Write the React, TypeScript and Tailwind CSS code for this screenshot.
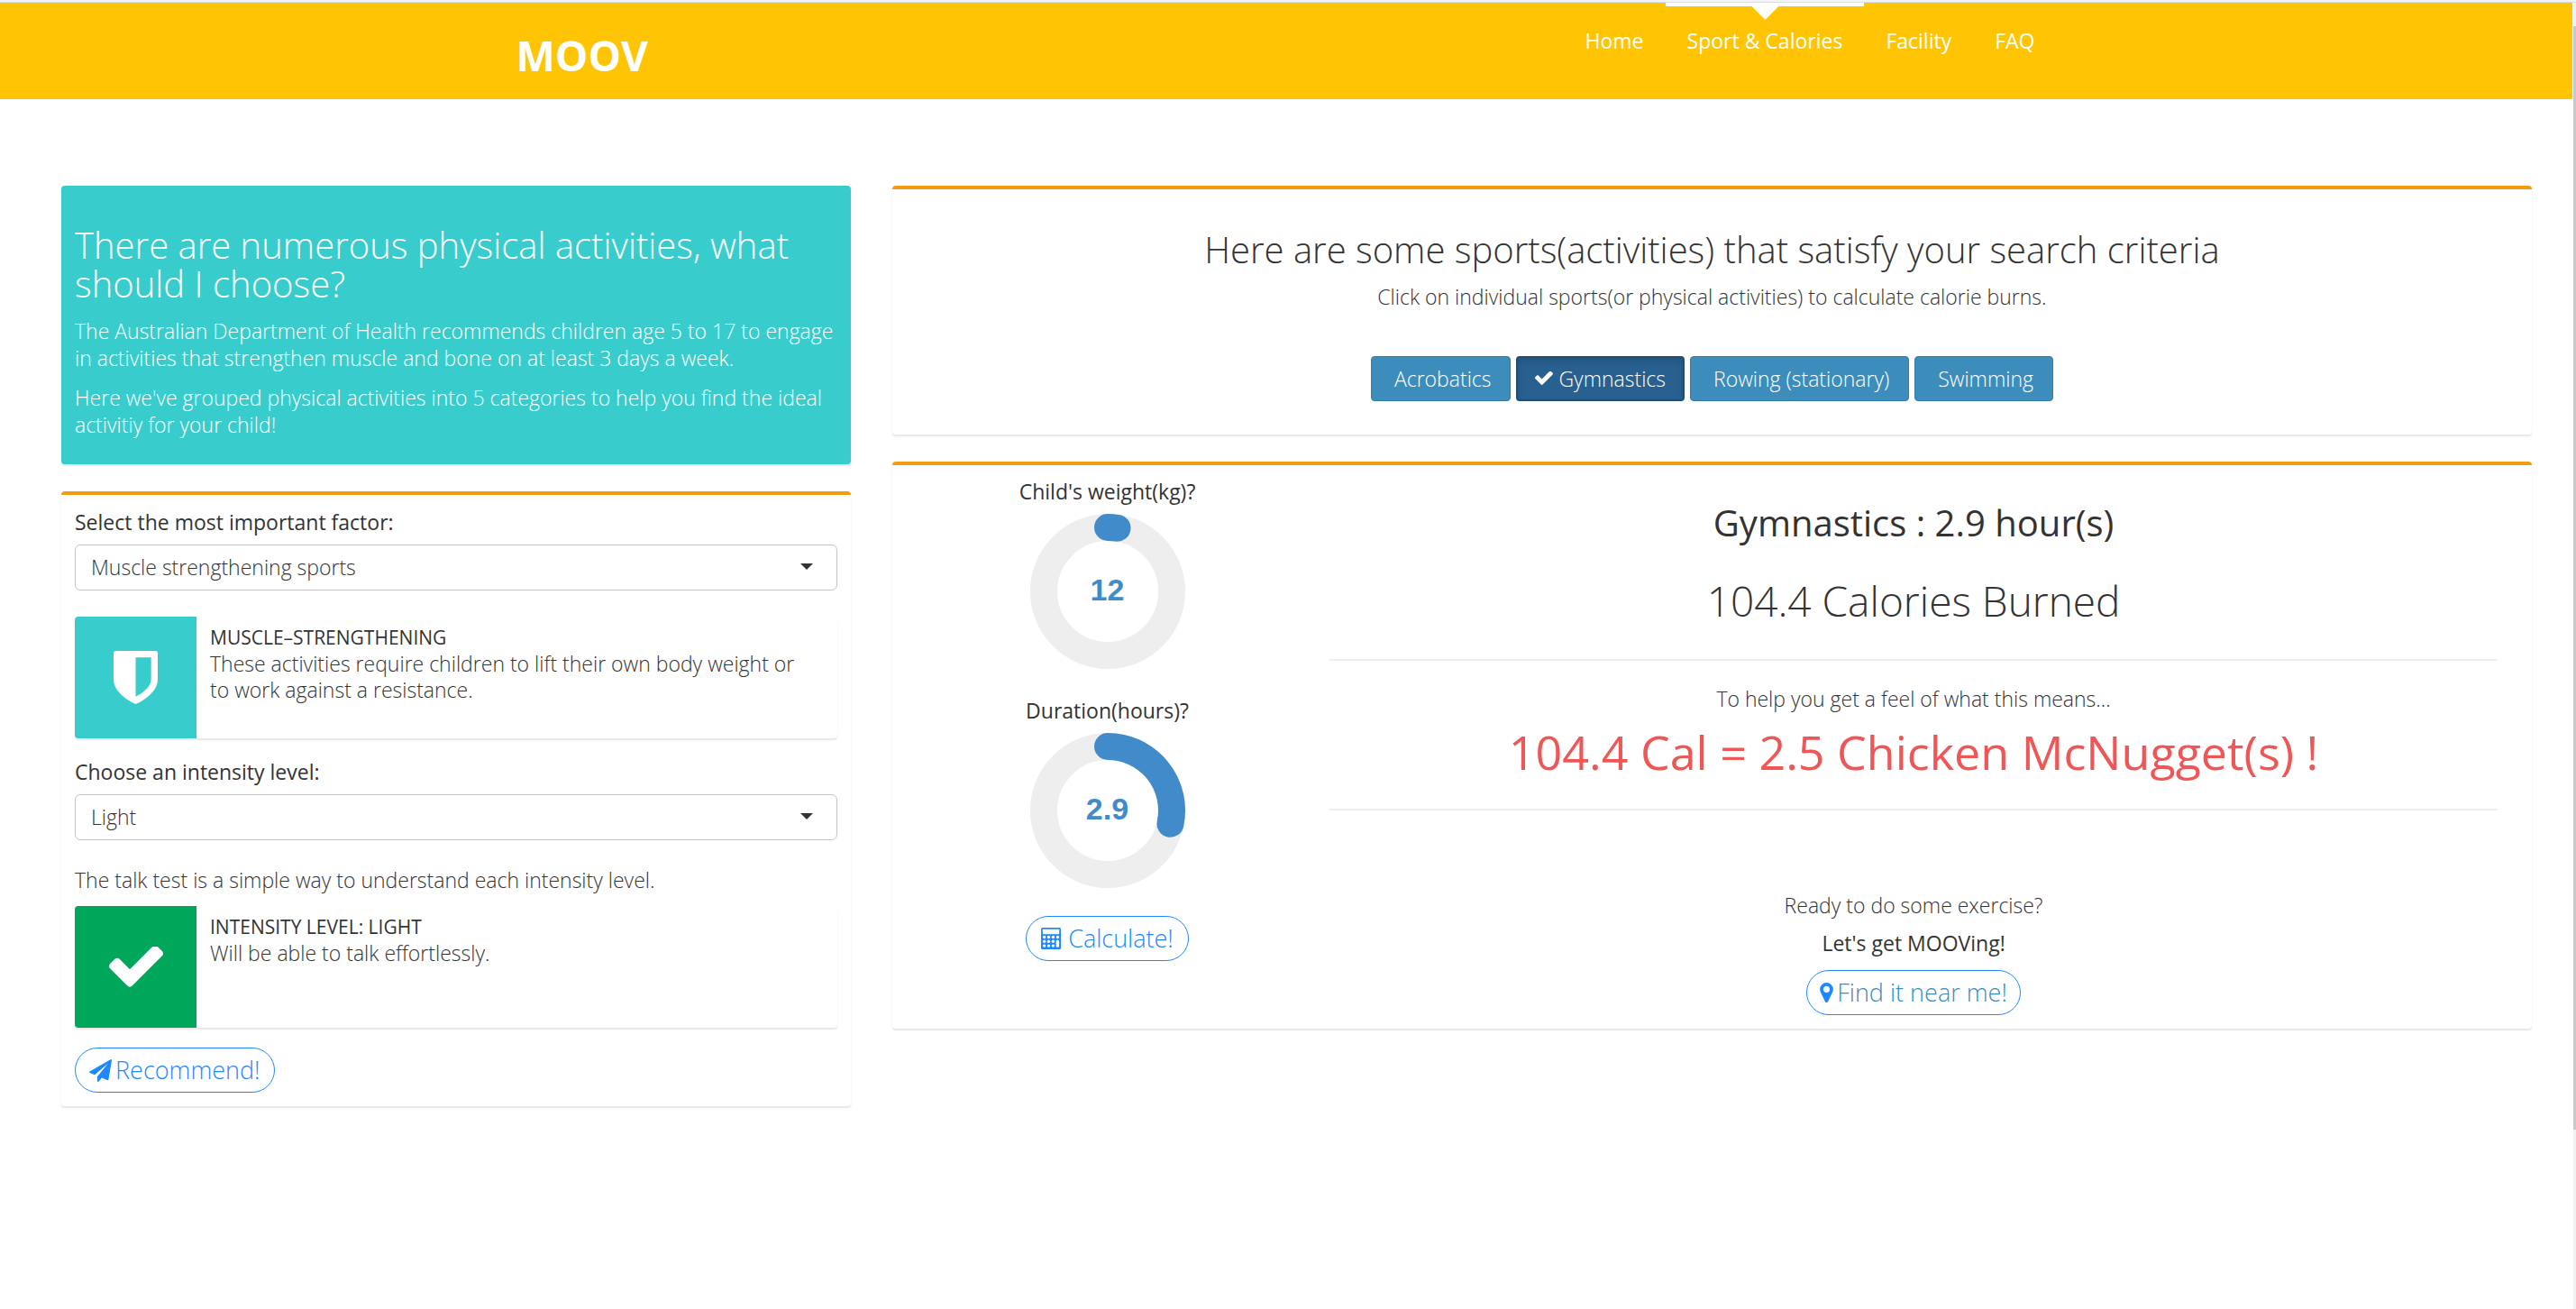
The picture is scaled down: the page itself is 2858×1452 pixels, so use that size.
import { useState, type ReactNode } from "react";

const NAV = ["Home", "Sport & Calories", "Facility", "FAQ"];
const SPORTS = ["Acrobatics", "Gymnastics", "Rowing (stationary)", "Swimming"];

function CheckIcon({ className }: { className: string }) {
  return (
    <svg viewBox="120 366 1552 1190" fill="currentColor" className={className} aria-hidden="true">
      <path d="M1671 566q0 40-28 68l-724 724-136 136q-28 28-68 28t-68-28l-136-136-362-362q-28-28-28-68t28-68l136-136q28-28 68-28t68 28l294 295 656-657q28-28 68-28t68 28l136 136q28 28 28 68z" />
    </svg>
  );
}

function ShieldIcon({ className }: { className: string }) {
  return (
    <svg viewBox="256 256 1280 1536" fill="currentColor" className={className} aria-hidden="true">
      <path
        fillRule="evenodd"
        d="M1344 1088V448H896v1137q119-63 213-137 235-184 235-360zm192-768v768q0 86-33.5 170.5t-83 150-118 127.5-126.5 103-121 77.5-89.5 49.5-42.5 20q-12 6-26 6t-26-6q-16-7-42.5-20t-89.5-49.5-121-77.5-126.5-103-118-127.5-83-150T256 1088V320q0-26 19-45t45-19h1152q26 0 45 19t19 45z"
      />
    </svg>
  );
}

function PlaneIcon({ className }: { className: string }) {
  return (
    <svg viewBox="0 0 1792 1792" fill="currentColor" className={className} aria-hidden="true">
      <path d="M1764 11q33 24 27 64l-256 1536q-5 29-32 45-14 8-31 8-11 0-24-5l-453-185-242 295q-18 23-49 23-13 0-22-4-19-7-30.5-23.5T640 1728v-349l864-1059-1069 925-395-162q-37-14-40-55-2-40 32-59L1696 9q15-9 32-9 20 0 36 11z" />
    </svg>
  );
}

function MarkerIcon({ className }: { className: string }) {
  return (
    <svg viewBox="384 128 1024 1536" fill="currentColor" className={className} aria-hidden="true">
      <path
        fillRule="evenodd"
        d="M1152 640q0-106-75-181t-181-75-181 75-75 181 75 181 181 75 181-75 75-181zm256 0q0 109-33 179l-364 774q-16 33-47.5 52t-67.5 19-67.5-19-46.5-52L417 819q-33-70-33-179 0-212 150-362t362-150 362 150 150 362z"
      />
    </svg>
  );
}

function CalculatorIcon({ className }: { className: string }) {
  return (
    <svg viewBox="0 0 22 24" className={className} aria-hidden="true">
      <rect width="22" height="24" rx="1.6" fill="currentColor" />
      <g fill="#fff">
        <rect x="1.8" y="1.8" width="18.4" height="5.4" rx="0.4" />
        {[10.5, 15.3, 20.1].map((y) =>
          [3.6, 8.5, 13.4].map((x) => <circle key={`${x}-${y}`} cx={x} cy={y} r="1.7" />)
        )}
        <circle cx="18.4" cy="10.5" r="1.7" />
        <rect x="16.7" y="13.6" width="3.4" height="8.2" rx="1.6" />
      </g>
    </svg>
  );
}

function SelectField({ id, label, options }: { id: string; label: string; options: string[] }) {
  return (
    <div>
      <label htmlFor={id} className="block text-[23px] leading-[30px] font-medium">
        {label}
      </label>
      <div className="relative mt-2.5">
        <select
          id={id}
          className="h-[51px] w-full appearance-none rounded-md border border-[#c4c4c4] bg-white pr-14 pb-0.5 pl-[17px] text-[23px] font-light text-[#333]"
        >
          {options.map((o) => (
            <option key={o}>{o}</option>
          ))}
        </select>
        <svg
          viewBox="0 0 14 7"
          className="pointer-events-none absolute top-[21px] right-[27px] h-[7px] w-[14px]"
          aria-hidden="true"
        >
          <path d="M0 0h14L7 7z" fill="#333" />
        </svg>
      </div>
    </div>
  );
}

function InfoBox({ tile, title, children }: { tile: ReactNode; title: string; children: ReactNode }) {
  return (
    <div className="flex min-h-[135px] rounded-sm shadow-[0_2px_2px_rgba(0,0,0,0.1)]">
      {tile}
      <div className="flex-1 pt-[9px] pr-[30px] pl-[15px]">
        <h3 className="text-[21px] leading-[29px] font-medium uppercase">{title}</h3>
        <p className="text-[23px] leading-[29px]">{children}</p>
      </div>
    </div>
  );
}

function Dial({ id, label, value, angle }: { id: string; label: string; value: string; angle: number }) {
  const a = (angle * Math.PI) / 180;
  const x = 87 + 71 * Math.sin(a);
  const y = 87 - 71 * Math.cos(a);
  return (
    <div className="flex flex-col items-center">
      <label htmlFor={id} className="text-[23px] leading-[30px] font-medium">
        {label}
      </label>
      <div className="relative mt-[9px] size-[174px]">
        <svg viewBox="0 0 174 174" fill="none" strokeWidth="30" className="size-full" aria-hidden="true">
          <circle cx="87" cy="87" r="71" stroke="#eee" />
          <path d={`M87 16A71 71 0 0 1 ${x} ${y}`} stroke="#428bca" strokeLinecap="round" />
        </svg>
        <input
          id={id}
          defaultValue={value}
          className="absolute inset-0 w-full bg-transparent pb-1 text-center font-['Liberation_Sans',sans-serif] text-[34px] font-bold text-[#428bca]"
        />
      </div>
    </div>
  );
}

const card = "rounded-sm border-t-[4px] border-[#f39c12] bg-white shadow-[0_2px_2px_rgba(0,0,0,0.1)]";
const pill =
  "inline-flex h-[50px] items-center rounded-full border border-[#1e88ff] bg-white text-[27px] font-light text-[#1e88ff]";

export default function App() {
  const [sport, setSport] = useState("Gymnastics");
  return (
    <div className="flex min-h-screen flex-col bg-white font-['Open_Sans',sans-serif] text-[23px] leading-[30px] font-light text-[#333]">
      <div className="h-[3px] border-b border-[#d9dde3] bg-[#f3f4f8]" />
      <div className="flex flex-1">
        <div className="min-w-0 flex-1">
          <header className="mr-px h-[107px] bg-[#ffc505] text-white">
            <div className="mx-auto flex max-w-[1755px] justify-between px-[23px]">
              <a href="#" className="pt-[28px] text-[46px] leading-[60px] font-bold">
                MOOV
              </a>
              <nav className="flex">
                {NAV.map((item) => {
                  const active = item === "Sport & Calories";
                  return (
                    <a
                      key={item}
                      href="#"
                      className="relative px-6 pt-[27px] text-[23px] leading-[30px] font-normal"
                    >
                      {active && (
                        <svg
                          viewBox="0 0 222 19"
                          preserveAspectRatio="none"
                          className="absolute inset-x-0 top-0 h-[19px] w-full"
                          aria-hidden="true"
                        >
                          <path d="M0 0h222v4H126L111 19 96 4H0z" fill="#fff" />
                        </svg>
                      )}
                      {item}
                    </a>
                  );
                })}
              </nav>
            </div>
          </header>

          <main className="grid grid-cols-[13fr_27fr] items-start gap-[46px] pt-24 pr-[46px] pl-[68px]">
            <div className="flex flex-col gap-[30px]">
              <section className="rounded-sm bg-[#39cccc] px-[15px] pt-[44px] pb-[29px] text-white shadow-[0_2px_2px_rgba(0,0,0,0.1)]">
                <h2 className="text-[40px] leading-[43px]">
                  There are numerous physical activities, what should I choose?
                </h2>
                <p className="mt-4">
                  The Australian Department of Health recommends children age 5 to 17 to engage in activities that
                  strengthen muscle and bone on at least 3 days a week.
                </p>
                <p className="mt-3.5">
                  Here we've grouped physical activities into 5 categories to help you find the ideal activitiy for
                  your child!
                </p>
              </section>

              <section className={`${card} px-[15px] pt-[15px] pb-[15px]`}>
                <SelectField
                  id="factor"
                  label="Select the most important factor:"
                  options={["Muscle strengthening sports"]}
                />
                <div className="mt-[29px] mb-[22px]">
                  <InfoBox
                    title="Muscle–strengthening"
                    tile={
                      <div className="flex w-[135px] items-center justify-center rounded-l-sm bg-[#39cccc] text-white">
                        <ShieldIcon className="w-[49px]" />
                      </div>
                    }
                  >
                    These activities require children to lift their own body weight or to work against a resistance.
                  </InfoBox>
                </div>
                <SelectField id="intensity" label="Choose an intensity level:" options={["Light"]} />
                <p className="mt-[29px] mb-3.5">The talk test is a simple way to understand each intensity level.</p>
                <InfoBox
                  title="Intensity level: Light"
                  tile={
                    <div className="flex w-[135px] items-center justify-center rounded-l-sm bg-[#00a65a] text-white">
                      <CheckIcon className="w-[60px]" />
                    </div>
                  }
                >
                  Will be able to talk effortlessly.
                </InfoBox>
                <div className="mt-[22px] flex">
                  <button type="button" className={`${pill} gap-1 px-[15px]`}>
                    <PlaneIcon className="size-[25px]" />
                    Recommend!
                  </button>
                </div>
              </section>
            </div>

            <div className="flex flex-col gap-[30px]">
              <section className={`${card} px-[15px] pt-[45px] pb-[37px] text-center`}>
                <h2 className="text-[40px] leading-[43px]">
                  Here are some sports(activities) that satisfy your search criteria
                </h2>
                <p className="mt-4">Click on individual sports(or physical activities) to calculate calorie burns.</p>
                <div className="mt-[51px] flex justify-center gap-1.5">
                  {SPORTS.map((s) =>
                    s === sport ? (
                      <button
                        key={s}
                        type="button"
                        aria-pressed="true"
                        className="flex h-[50px] items-center gap-1.5 rounded-sm border-2 border-[#204d74] bg-[#286090] px-[19px] text-white shadow-[inset_0_4px_7px_rgba(0,0,0,0.13)]"
                      >
                        <CheckIcon className="w-5" />
                        {s}
                      </button>
                    ) : (
                      <button
                        key={s}
                        type="button"
                        aria-pressed="false"
                        onClick={() => setSport(s)}
                        className="flex h-[50px] items-center rounded-sm border border-[#367fa9] bg-[#3c8dbc] pr-[21px] pl-[25px] text-white"
                      >
                        {s}
                      </button>
                    )
                  )}
                </div>
              </section>

              <section className={`${card} grid grid-cols-[1fr_3fr] px-[15px] pt-[14px] pb-[15px]`}>
                <div className="flex flex-col items-center gap-[30px]">
                  <Dial id="weight" label="Child's weight(kg)?" value="12" angle={8.5} />
                  <Dial id="duration" label="Duration(hours)?" value="2.9" angle={102} />
                  <button type="button" className={`${pill} gap-2 px-4`}>
                    <CalculatorIcon className="h-6 w-[22px]" />
                    Calculate!
                  </button>
                </div>
                <div className="flex flex-col items-center px-[23px] pt-7 text-center">
                  <h3 className="text-[40px] leading-[44px] font-normal">{sport} : 2.9 hour(s)</h3>
                  <h2 className="mt-[39px] text-[46px] leading-[50px]">104.4 Calories Burned</h2>
                  <hr className="mt-10 w-full border-t-2 border-[#eee]" />
                  <p className="mt-[27px]">To help you get a feel of what this means...</p>
                  <p className="mt-4 text-[52px] leading-[56px] font-normal text-[#ef5757]">
                    104.4 Cal = 2.5 Chicken McNugget(s) !
                  </p>
                  <hr className="mt-[35px] w-full border-t-2 border-[#eee]" />
                  <p className="mt-[90px]">Ready to do some exercise?</p>
                  <p className="mt-3 font-medium">Let's get MOOVing!</p>
                  <a href="#" className={`${pill} mt-[15px] gap-1 px-3.5`}>
                    <MarkerIcon className="h-[22px] w-[15px]" />
                    <span className="text-[#3c8dbc]">Find it near me!</span>
                  </a>
                </div>
              </section>
            </div>
          </main>
        </div>

        <div className="flex w-[3px] flex-col bg-[#f1f1f1] pt-[26px]">
          <div className="h-[1226px] max-h-[86%] bg-[#c9c9c9]" />
        </div>
      </div>
    </div>
  );
}
